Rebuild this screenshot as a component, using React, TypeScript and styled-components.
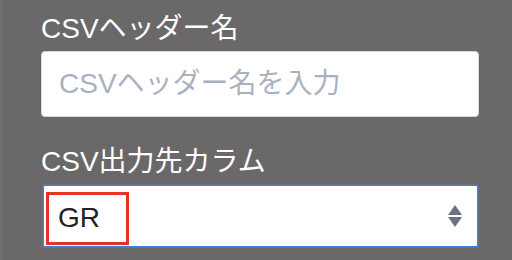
import styled, { createGlobalStyle } from "styled-components";

const GlobalStyle = createGlobalStyle`
  html, body {
    margin: 0;
    padding: 0;
    background: #6a6869;
  }

  body {
    font-family: "Liberation Sans", "Noto Sans CJK JP", sans-serif;
  }
`;

const Page = styled.div`
  width: 512px;
  height: 260px;
  overflow: hidden;
  box-sizing: border-box;
  padding: 11px 33px 0 41px;
  background: #6a6869;
  box-shadow: inset 2px 0 0 #727071;
`;

const Field = styled.div<{ $gap: number }>`
  display: flex;
  flex-direction: column;
  margin-top: ${(props) => props.$gap}px;
`;

const Label = styled.label`
  font-size: 28px;
  line-height: 36px;
  color: #ffffff;
  white-space: nowrap;
`;

const TextInput = styled.input`
  box-sizing: border-box;
  width: 438px;
  height: 66px;
  margin: 4px 0 0;
  padding: 0 17px;
  border: 1px solid #d6d6d8;
  border-radius: 4px;
  background: #ffffff;
  font-family: inherit;
  font-size: 28px;
  color: #222;
  outline: none;

  &::placeholder {
    color: #a9b1c0;
  }
`;

const SelectBox = styled.div`
  position: relative;
  box-sizing: border-box;
  display: flex;
  align-items: center;
  width: 435px;
  height: 62px;
  margin: 5px 0 0 2px;
  padding: 0 15px 0 14px;
  border: 1px solid #3f7fe0;
  border-radius: 2px;
  background: #ffffff;
  box-shadow: 0 0 0 1px rgba(90, 140, 230, 0.3);
  cursor: pointer;
`;

const SelectValue = styled.span`
  margin-top: 3px;
  font-size: 28px;
  line-height: 32px;
  color: #222222;
`;

const Arrows = styled.svg`
  margin-left: auto;
  flex-shrink: 0;
`;

const Highlight = styled.div`
  position: absolute;
  left: 2px;
  top: 6px;
  width: 83px;
  height: 53px;
  box-sizing: border-box;
  border: 3px solid #e5332a;
  pointer-events: none;
`;

export default function App() {
  return (
    <>
      <GlobalStyle />
      <Page>
        <Field $gap={0}>
          <Label htmlFor="csv_header">CSVヘッダー名</Label>
          <TextInput id="csv_header" placeholder="CSVヘッダー名を入力" />
        </Field>

        <Field $gap={27}>
          <Label>CSV出力先カラム</Label>
          <SelectBox>
            <SelectValue>GR</SelectValue>
            <Arrows width="14" height="22" viewBox="0 0 14 22">
              <polygon points="7,0 14,10 0,10" fill="#6b7285" />
              <polygon points="0,12 14,12 7,22" fill="#6b7285" />
            </Arrows>
            <Highlight />
          </SelectBox>
        </Field>
      </Page>
    </>
  );
}
